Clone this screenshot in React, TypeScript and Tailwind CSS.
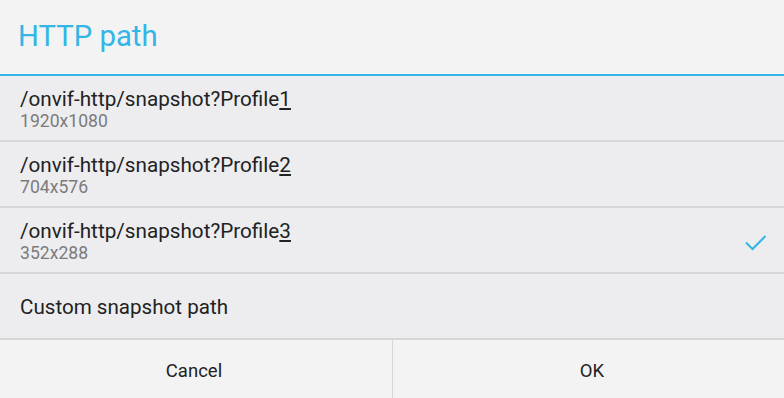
import React from 'react';

const items = [
  { path: '/onvif-http/snapshot?Profile', n: '1', size: '1920x1080', checked: false },
  { path: '/onvif-http/snapshot?Profile', n: '2', size: '704x576', checked: false },
  { path: '/onvif-http/snapshot?Profile', n: '3', size: '352x288', checked: true },
];

const App: React.FC = () => {
  return (
    <div className="w-[784px] h-[398px] flex flex-col bg-[#ededef] overflow-hidden" style={{ fontFamily: 'Roboto, "Noto Sans", sans-serif' }}>
      <div className="h-[74px] flex items-center pl-[18px] bg-[#f3f3f3]">
        <h1 className="text-[29.3px] leading-none text-[#33b5e5]">HTTP path</h1>
      </div>
      <div className="h-[2px] bg-[#33b5e5]" />

      {items.map((item, i) => (
        <div key={i} className="h-[66px] flex items-center border-b-2 border-[#d6d6d8] pl-5 pr-[16px]">
          <div className="flex-1 flex flex-col pt-[1px]">
            <div className="text-[20.7px] leading-[24px] text-[#222222]">
              {item.path}
              <span className="underline underline-offset-2">{item.n}</span>
            </div>
            <div className="text-[17.6px] leading-[20px] text-[#7b7b7b]">{item.size}</div>
          </div>
          {item.checked && (
            <svg width="24" height="20" viewBox="0 0 24 20" className="mt-[5px]">
              <path d="M2 9.5 L8.5 16 L21.5 3" fill="none" stroke="#33b5e5" strokeWidth="2" />
            </svg>
          )}
        </div>
      ))}

      <div className="h-[66px] flex items-center border-b-2 border-[#d6d6d8] pl-5 pt-[3px]">
        <span className="text-[20.6px] text-[#222222]">Custom snapshot path</span>
      </div>

      <div className="flex-1 flex bg-[#f3f3f3]">
        <button className="w-[393px] flex items-center justify-center text-[18.5px] text-[#222222] border-r border-[#d6d6d8] pt-[6px] pr-[4px]">Cancel</button>
        <button className="flex-1 flex items-center justify-center text-[18.5px] text-[#222222] pt-[6px] pl-[7px]">OK</button>
      </div>
    </div>
  );
};

export default App;
